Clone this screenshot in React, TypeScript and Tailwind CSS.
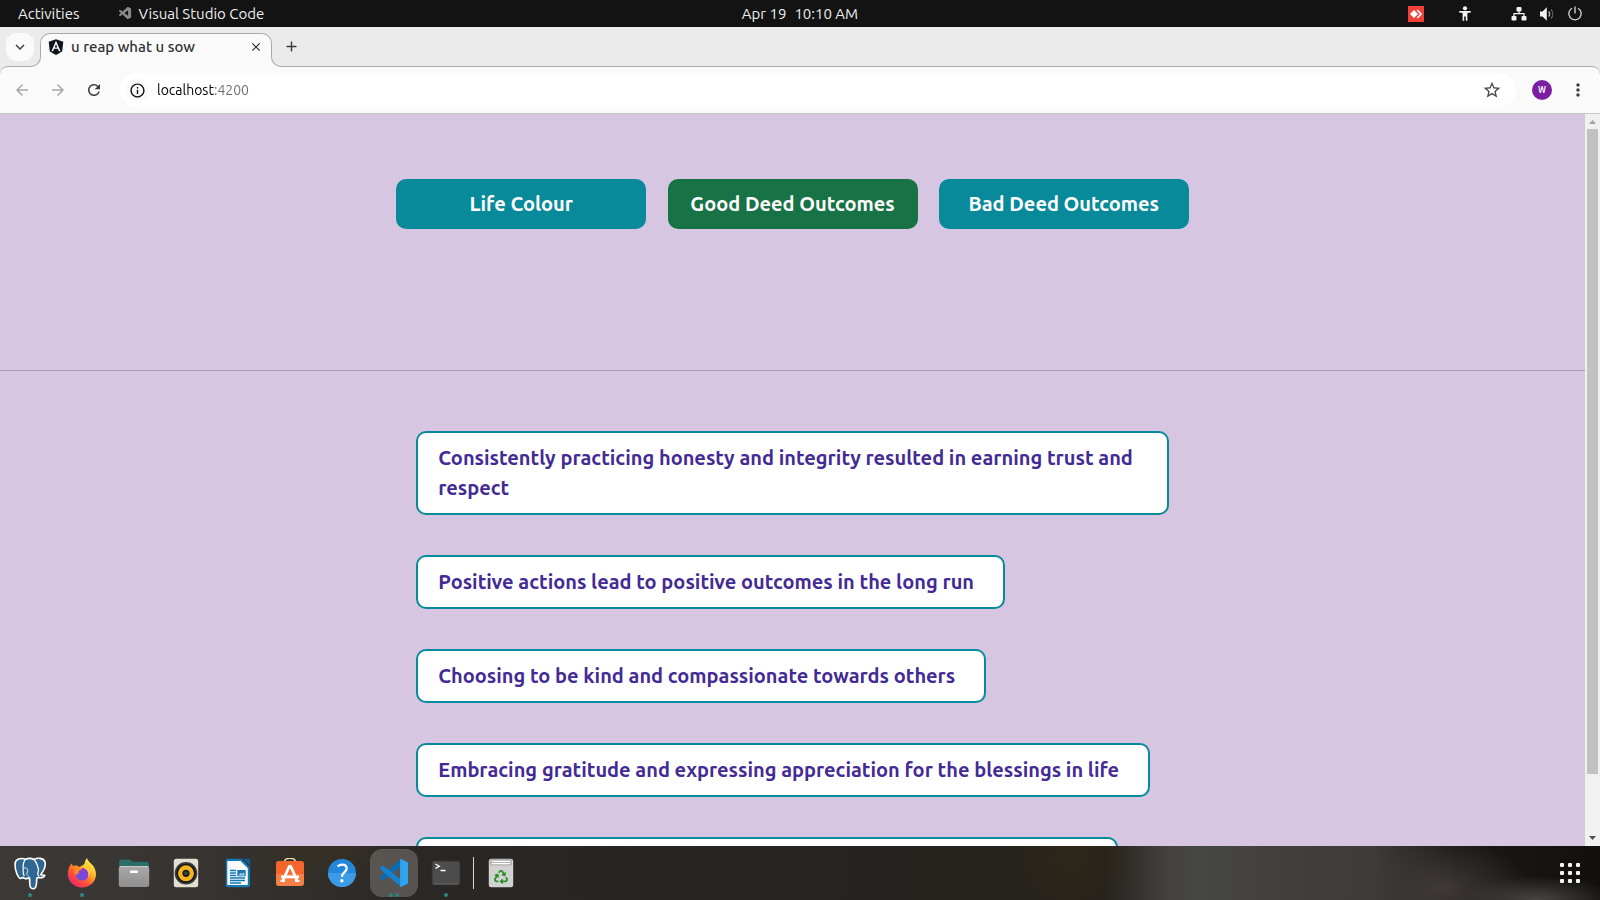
import type { ReactNode } from "react";
import { FaAngular, FaRecycle } from "react-icons/fa";
import { VscVscode } from "react-icons/vsc";
import {
  MdArrowBack,
  MdArrowForward,
  MdRefresh,
  MdInfoOutline,
  MdStarBorder,
  MdMoreVert,
  MdExpandMore,
  MdClose,
  MdAdd,
} from "react-icons/md";

const navItems = [
  { label: "Life Colour", active: false },
  { label: "Good Deed Outcomes", active: true },
  { label: "Bad Deed Outcomes", active: false },
];

const outcomes = [
  "Consistently practicing honesty and integrity resulted in earning trust and respect",
  "Positive actions lead to positive outcomes in the long run",
  "Choosing to be kind and compassionate towards others",
  "Embracing gratitude and expressing appreciation for the blessings in life",
];

function AnyDeskIcon() {
  return (
    <svg viewBox="0 0 16 16" className="size-4">
      <rect width="16" height="16" fill="#ef4136" />
      <path d="M6 4l4 4-4 4-4-4z" fill="#fff" />
      <path d="M8.6 4.6L9.8 3.6 14.2 8l-4.4 4.4-1.2-1L12 8z" fill="#fff" />
    </svg>
  );
}

function AccessibilityIcon() {
  return (
    <svg viewBox="0 0 16 16" className="size-4" fill="#f2f2f2">
      <circle cx="8" cy="2.3" r="2.1" />
      <path d="M2.200 5h11.600v1.500l-3.400.6V14.800H8.800V10.500H7.200v4.300H5.600V7.100L2.200 6.500z" />
    </svg>
  );
}

function NetworkIcon() {
  return (
    <svg viewBox="0 0 16 16" className="size-4" fill="#f2f2f2">
      <rect x="5.500" y="1" width="5" height="4.400" rx="1" />
      <rect x="0.500" y="10" width="5" height="4.400" rx="1" />
      <rect x="10.500" y="10" width="5" height="4.400" rx="1" />
      <path d="M8 5v3M3 10.500V7.700h10v2.800" fill="none" stroke="#f2f2f2" strokeWidth="1.200" />
    </svg>
  );
}

function VolumeIcon() {
  return (
    <svg viewBox="0 0 16 16" className="size-4">
      <path d="M1 5.500h2.500L7.800 1.300v13.400L3.500 10.500H1z" fill="#f2f2f2" />
      <path d="M9.700 5.500c1.200 1.400 1.200 3.600 0 5" fill="none" stroke="#bdbdbd" strokeWidth="1.200" />
      <path d="M12 3.500c2.400 2.600 2.400 6.400 0 9" fill="none" stroke="#666" strokeWidth="1.200" />
    </svg>
  );
}

function PowerIcon() {
  return (
    <svg viewBox="0 0 16 16" className="size-4" fill="none" stroke="#dcdcdc" strokeWidth="1.300">
      <path d="M5 2.300a6.200 6.200 0 1 0 6 0M8 .5v7" />
    </svg>
  );
}

function ElephantIcon() {
  return (
    <svg viewBox="0 0 32 33" className="h-[33px] w-8" strokeLinejoin="round" strokeLinecap="round">
      <path
        d="M20 2.500C23 .6 29.600.600 31 5c.9 3.500-1.300 8.800-4.200 12.600.9.800 2.600.6 4 .7-.9 1.900-3.800 2.700-6 2.300l-2 .4c-.3 3.600.1 7.600-1.500 9.700-1.400 1.500-4 1.300-4.900-.5-1-2.500-.5-6-.9-9.200l-1.900.4c-2 .4-4 .2-4.600-1l-2.500 1.100C3.900 21 1 13.500 1 7.500 1 2.500 5.500.3 11.600 2.200 14 1.200 17.600 1.200 20 2.500z"
        fill="#2f6792"
        stroke="#fff"
        strokeWidth="1.600"
      />
      <path
        d="M11.600 2.200C9.200 4.500 8.900 8 9.200 12c.1 2.800-.4 4.200.8 6.500M20 2.500c2.600 3 4.300 8 4.500 11.500-1.200 2-1 3.500.3 5"
        fill="none"
        stroke="#fff"
        strokeWidth="1.200"
      />
      <path
        d="M9.300 11.500c1.500-1 3.600-.8 4.200.6.600 2-.8 3.600-.6 5.300.8 1.400 2.300 1.700 2.400 3.100"
        fill="none"
        stroke="#dfe8ef"
        strokeWidth="1"
      />
    </svg>
  );
}

function FirefoxIcon() {
  return (
    <svg viewBox="0 0 30 30" className="size-[30px]">
      <defs>
        <linearGradient id="ffBody" x1=".85" y1=".1" x2=".2" y2=".95">
          <stop offset="0" stopColor="#fff24a" />
          <stop offset=".35" stopColor="#ffb02e" />
          <stop offset=".65" stopColor="#ff5634" />
          <stop offset="1" stopColor="#f0246f" />
        </linearGradient>
        <linearGradient id="ffCore" x1="0" y1="1" x2="1" y2="0">
          <stop offset="0" stopColor="#5a5be0" />
          <stop offset="1" stopColor="#9a34d6" />
        </linearGradient>
      </defs>
      <path
        d="M17.500 6c0-2.500 1.500-4.800 2.500-6 .6 3 3.200 4.600 5.200 6.800C26.800 8.500 29 12 29 16.200 29 23.500 22.800 29.500 15 29.500S.8 23.500.8 16c0-4.500 1.500-8.500 4.200-10.800.1 1.200.3 2 .9 2.800C8.500 7 11 7.400 12.500 9z"
        fill="url(#ffBody)"
      />
      <circle cx="15.200" cy="16.200" r="6.300" fill="url(#ffCore)" />
      <path
        d="M5 8.500c2.500-1.300 5.300-.9 7 1 1.200.6 2.400.6 3.300.7-.3 1.700-2.700 2.200-3.500 3.100-.4 1 .4 1.700-.3 2.700-1.500-.8-2.800 0-2.800 1.500-2-2.500-1.500-5-.7-6z"
        fill="#ff8a22"
      />
      <path d="M17.500 6c2.800 1.400 5.300 4.500 5.300 8 0 2-.6 3.500-1.500 4.500.8-4-1-7.500-4.800-8.800z" fill="#ffcf35" />
    </svg>
  );
}

function FilesIcon() {
  return (
    <svg viewBox="0 0 32 30" className="h-[30px] w-8">
      <defs>
        <linearGradient id="fold" x1="0" y1="0" x2="0" y2="1">
          <stop offset="0" stopColor="#a9a9a9" />
          <stop offset="1" stopColor="#8f8f8f" />
        </linearGradient>
      </defs>
      <path d="M1 4.500C1 2.500 2 1.500 4 1.500h7.500c1.500 0 2 2.200 3.500 2.200H28c2 0 3 1 3 3V20H1z" fill="#2a6d69" />
      <rect x=".8" y="8" width="30.400" height="21" rx="2.500" fill="url(#fold)" />
      <path d="M2 8.500h28" stroke="#c9c9c9" strokeWidth="1" />
      <rect x="12" y="12.500" width="8" height="2.600" rx=".8" fill="#fff" />
    </svg>
  );
}

function SpeakerIcon() {
  return (
    <svg viewBox="0 0 26 30" className="h-[30px] w-[26px]">
      <rect x=".8" y=".8" width="24.400" height="28.400" rx="2.500" fill="#e4dfd3" />
      <circle cx="13" cy="15.300" r="11.300" fill="#3a3a38" />
      <circle cx="13" cy="15.300" r="9.600" fill="#151515" />
      <circle cx="13" cy="15.300" r="8" fill="#f3b51c" />
      <circle cx="13" cy="15.300" r="3.600" fill="#1f1f1f" />
      <circle cx="13" cy="15.300" r="1.800" fill="#3d4650" />
    </svg>
  );
}

function WriterIcon() {
  return (
    <svg viewBox="0 0 26 30" className="h-[30px] w-[26px]">
      <path d="M3 .8h13.500L25 9.500V27c0 1.400-.8 2.200-2.200 2.200H3C1.600 29.200.8 28.400.8 27V3C.8 1.600 1.600.8 3 .8z" fill="#1379b5" />
      <path d="M3.300 3h12.300l7.200 7.300V26c0 .7-.3 1-1 1H3.300c-.7 0-1-.3-1-1V4c0-.7.300-1 1-1z" fill="#fafafa" />
      <path d="M18 .8h5.500c1 0 1.700.6 1.700 1.700v5.700z" fill="#15598a" />
      <path
        d="M5 12.500h6M5 15h6M5 17.500h6M5 20h15M5 22.500h15M5 25h11"
        stroke="#1379b5"
        strokeWidth="1.300"
      />
      <rect x="12.300" y="12" width="8.400" height="6.300" fill="#1e78ad" />
      <path d="M13.300 17.500l2.200-2.500 1.500 1 1.500-1.500 1.500 3z" fill="#9dd0ee" />
    </svg>
  );
}

function SoftwareIcon() {
  return (
    <svg viewBox="0 0 30 30" className="size-[30px]">
      <path d="M9.500 4.500V3.300C10 .6 12 .2 15 .2s5 .4 5.500 3.100v1.200" fill="none" stroke="#e9d7ad" strokeWidth="1.500" />
      <path d="M1 5.300C1 4 2 3 3.300 3h23.400C28 3 29 4 29 5.300V17H1z" fill="#f4662c" />
      <path d="M1 16h28v9.500c0 1.400-1 2.500-2.300 2.500H3.300C2 28 1 26.900 1 25.500z" fill="#f58045" />
      <path
        d="M8 22.500L14.200 8.500h1.600l6.200 14M6 18.800h18"
        fill="none"
        stroke="#fff"
        strokeWidth="2.800"
        strokeLinejoin="round"
      />
      <path d="M5.500 23h4.500M20 23h4.500" stroke="#fff" strokeWidth="2" />
    </svg>
  );
}

function HelpIcon() {
  return (
    <svg viewBox="0 0 30 30" className="size-[30px]">
      <circle cx="15" cy="15" r="14" fill="#2386dc" />
      <path d="M1 15a14 14 0 0 0 28 0z" fill="#3c9be4" />
      <path
        d="M10.500 8.500c1.300-1.200 2.900-1.800 4.600-1.800 2.700 0 4.600 1.400 4.600 3.800 0 3.600-4.800 3.900-4.800 8.300"
        fill="none"
        stroke="#fff"
        strokeWidth="2.200"
      />
      <circle cx="14.900" cy="22.700" r="1.700" fill="#fff" />
    </svg>
  );
}

function CodeIcon() {
  return (
    <svg viewBox="0 0 30 30" className="size-[30px]">
      <path d="M22 1v7.500L4.500 21.900c-.5.4-1 .3-1.400 0l-1.800-1.700c-.4-.4-.4-1 0-1.400z" fill="#0b6cb5" />
      <path d="M22 29v-7.500L4.500 8.100c-.5-.4-1-.3-1.400 0L1.300 9.800c-.4.4-.4 1 0 1.400z" fill="#1583cc" />
      <path d="M22 1l6.200 3c.5.300.8.7.8 1.200v19.600c0 .5-.3.900-.8 1.200L22 29c-.6.200-.9 0-.9-.6V1.600c0-.6.300-.8.900-.6z" fill="#2fa3ee" />
    </svg>
  );
}

function TerminalIcon() {
  return (
    <svg viewBox="0 0 30 30" className="size-[30px]">
      <rect x="1" y="3" width="28" height="24" rx="2.500" fill="#4c4c4c" stroke="#333" strokeWidth=".8" />
      <path d="M2.500 26h25" stroke="#6a6a6a" strokeWidth=".8" />
      <path d="M4.500 6l3.800 2.200-3.800 2.200M9.500 12.500h5" fill="none" stroke="#fff" strokeWidth="1.300" />
    </svg>
  );
}

function TrashIcon() {
  return (
    <span className="grid place-items-center">
      <svg viewBox="0 0 26 30" className="col-start-1 row-start-1 h-[30px] w-[26px]">
        <rect x=".8" y=".8" width="24.400" height="28.400" rx="2.500" fill="#d2d2d2" />
        <rect x="2.500" y="1.600" width="21" height="5.600" rx="1" fill="#8a8a8a" />
        <path d="M3.500 2.500h19v4h-19z" fill="#fff" />
        <path d="M4 4.500h18" stroke="#a8a8a8" strokeWidth=".9" />
      </svg>
      <FaRecycle className="col-start-1 row-start-1 mt-2 size-[14px] text-[#2b8f25]" />
    </span>
  );
}

function DockItem({
  name,
  dots = 0,
  active = false,
  children,
}: {
  name: string;
  dots?: number;
  active?: boolean;
  children: ReactNode;
}) {
  return (
    <button
      type="button"
      aria-label={name}
      className={
        active
          ? "relative flex size-12 items-center justify-center rounded-xl bg-white/20"
          : "relative flex size-12 items-center justify-center rounded-xl"
      }
    >
      {children}
      <span className="absolute inset-x-0 bottom-0 flex justify-center gap-[2px]">
        {Array.from({ length: dots }, (_, i) => (
          <span key={i} className="size-1 rounded-full bg-[#2f8580]" />
        ))}
      </span>
    </button>
  );
}

function TopBar() {
  return (
    <header className="grid h-[27px] shrink-0 grid-cols-[1fr_auto_1fr] items-center bg-[#131313] text-[15px] leading-[27px] text-[#eeeeee]">
      <div className="flex items-center pl-[18px]">
        <button type="button">Activities</button>
        <button type="button" className="ml-[38px] flex items-center gap-[6px]">
          <VscVscode className="size-[15px] text-[#8a8a8a]" />
          Visual Studio Code
        </button>
      </div>
      <button type="button" className="flex gap-2">
        <span>Apr 19</span>
        <span>10:10 AM</span>
      </button>
      <div className="flex items-center justify-end pr-[17px]">
        <AnyDeskIcon />
        <span className="ml-[33px] flex">
          <AccessibilityIcon />
        </span>
        <span className="ml-[38px] flex gap-3">
          <NetworkIcon />
          <VolumeIcon />
          <PowerIcon />
        </span>
      </div>
    </header>
  );
}

function TabStrip() {
  return (
    <div className="flex h-[39px] shrink-0 items-start gap-[6px] bg-[#ebebeb] px-[6px] pt-[6px]">
      <button
        type="button"
        aria-label="Search tabs"
        className="flex size-7 items-center justify-center rounded-[10px] bg-[#fafafa] text-[#3c3c3c]"
      >
        <MdExpandMore className="size-[18px]" />
      </button>
      <div className="relative z-10 flex h-[34px] w-[232px] items-start rounded-t-[10px] border border-b-0 border-[#ababab] bg-[#fafafa] pt-1 pr-[6px] pl-[6px]">
        <span className="absolute bottom-0 -left-[10px] size-[10px] bg-[#fafafa]">
          <span className="block size-[10px] rounded-br-[10px] border-r border-b border-[#ababab] bg-[#ebebeb]" />
        </span>
        <span className="absolute -right-[10px] bottom-0 size-[10px] bg-[#fafafa]">
          <span className="block size-[10px] rounded-bl-[10px] border-b border-l border-[#ababab] bg-[#ebebeb]" />
        </span>
        <span className="flex h-[18px] flex-1 items-center gap-[6px] text-[15px] font-medium text-[#2f3236]">
          <FaAngular className="size-[18px] text-[#0d121c]" />
          u reap what u sow
        </span>
        <button type="button" aria-label="Close tab" className="flex size-[18px] items-center justify-center text-[#2f2f2f]">
          <MdClose className="size-[14px]" />
        </button>
      </div>
      <button type="button" aria-label="New tab" className="flex size-[26px] items-center justify-center text-[#3c3c3c]">
        <MdAdd className="size-[17px]" />
      </button>
    </div>
  );
}

function Toolbar() {
  return (
    <div className="shrink-0 bg-[#ebebeb]">
      <div className="flex h-12 items-center rounded-t-[8px] border-t border-b border-t-[#ababab] border-b-[#c6c6c6] bg-[#fafafa] pr-3 pl-2">
        <div className="mr-3 flex gap-2">
          <button type="button" aria-label="Back" className="flex size-7 items-center justify-center text-[#a8a8a8]">
            <MdArrowBack className="size-[18px]" />
          </button>
          <button type="button" aria-label="Forward" className="flex size-7 items-center justify-center text-[#a8a8a8]">
            <MdArrowForward className="size-[18px]" />
          </button>
          <button type="button" aria-label="Reload" className="flex size-7 items-center justify-center text-[#3c3c3c]">
            <MdRefresh className="size-[18px]" />
          </button>
        </div>
        <div className="flex h-[34px] flex-1 items-center rounded-full bg-white pr-[14px] pl-[5px]">
          <button
            type="button"
            aria-label="View site information"
            className="mr-2 flex size-6 items-center justify-center rounded-full bg-[#fafafa] text-[#111]"
          >
            <MdInfoOutline className="size-[17px]" />
          </button>
          <input
            type="text"
            aria-label="Address"
            defaultValue="localhost:4200"
            className="min-w-0 flex-1 bg-[linear-gradient(90deg,#000_57px,#6a6a6a_57px)] bg-clip-text text-[14px] text-transparent outline-none"
          />
          <button type="button" aria-label="Bookmark this tab" className="text-[#474747]">
            <MdStarBorder className="size-5" />
          </button>
        </div>
        <button
          type="button"
          aria-label="Profile"
          className="mx-4 flex size-5 items-center justify-center rounded-full bg-[#7a1fa2] font-[Roboto,sans-serif] text-[9px] leading-5 font-medium text-white"
        >
          W
        </button>
        <button type="button" aria-label="Menu" className="flex size-5 items-center justify-center text-[#3c3c3c]">
          <MdMoreVert className="size-5" />
        </button>
      </div>
    </div>
  );
}

function Scrollbar() {
  return (
    <div className="flex w-[15px] shrink-0 flex-col items-center bg-[#f1f1f1]">
      <svg viewBox="0 0 15 15" className="size-[15px]">
        <path d="M4 10h7L7.500 6z" fill="#a3a3a3" />
      </svg>
      <div className="w-[11px] flex-[645] bg-[#c1c1c1]" />
      <div className="flex-[57]" />
      <svg viewBox="0 0 15 15" className="size-[15px]">
        <path d="M4 5h7L7.500 9z" fill="#505050" />
      </svg>
    </div>
  );
}

function Page() {
  return (
    <div className="flex min-h-0 flex-1">
      <main className="flex-1 overflow-hidden bg-[#d6c6e1] pt-[65px]">
        <nav className="mx-auto flex w-1/2 justify-between pb-[141px]">
          {navItems.map((item) => (
            <button
              key={item.label}
              type="button"
              className={
                item.active
                  ? "h-[50px] w-[250px] rounded-[10px] bg-[#177245] text-[20px] font-bold text-white"
                  : "h-[50px] w-[250px] rounded-[10px] bg-[#088a9b] text-[20px] font-bold text-white"
              }
            >
              {item.label}
            </button>
          ))}
        </nav>
        <hr className="border-[#a99db4]" />
        <ul className="mx-auto mt-[60px] flex w-1/2 flex-col items-start gap-10 px-5">
          {outcomes.map((text) => (
            <li
              key={text}
              className="rounded-[10px] border-2 border-[#088a9b] bg-white py-[10px] pr-[29px] pl-5 text-[20px] leading-[30px] font-bold text-[#432a94]"
            >
              {text}
            </li>
          ))}
          <li className="h-[54px] w-[702px] rounded-[10px] border-2 border-[#088a9b] bg-white" />
        </ul>
      </main>
      <Scrollbar />
    </div>
  );
}

function Dock() {
  return (
    <footer className="flex h-[54px] shrink-0 items-center justify-between bg-[radial-gradient(ellipse_80px_24px_at_96%_100%,#464544,transparent),radial-gradient(ellipse_90px_50px_at_90%_80%,#3f3a37,transparent),radial-gradient(ellipse_70px_70px_at_67%_20%,#2e2719,transparent),radial-gradient(ellipse_80px_40px_at_20%_0%,#363024,transparent),linear-gradient(90deg,#3d3936_0%,#36322f_14%,#2a2623_28%,#272522_45%,#25221d_69%,#434241_73%,#464645_75%,#413f3c_81%,#3c3b3a_86%,#1c1917_91%,#12100e_100%)] pr-5 pl-[6px]">
      <div className="flex items-center gap-1">
        <DockItem name="pgAdmin" dots={1}>
          <ElephantIcon />
        </DockItem>
        <DockItem name="Firefox" dots={1}>
          <FirefoxIcon />
        </DockItem>
        <DockItem name="Files">
          <FilesIcon />
        </DockItem>
        <DockItem name="Rhythmbox">
          <SpeakerIcon />
        </DockItem>
        <DockItem name="LibreOffice Writer">
          <WriterIcon />
        </DockItem>
        <DockItem name="Ubuntu Software">
          <SoftwareIcon />
        </DockItem>
        <DockItem name="Help">
          <HelpIcon />
        </DockItem>
        <DockItem name="Visual Studio Code" dots={2} active>
          <CodeIcon />
        </DockItem>
        <DockItem name="Terminal" dots={1}>
          <TerminalIcon />
        </DockItem>
        <span className="-mx-px h-8 w-px bg-[#d8d8d8]" />
        <DockItem name="Trash">
          <TrashIcon />
        </DockItem>
      </div>
      <button type="button" aria-label="Show applications" className="grid grid-cols-3 gap-1">
        {Array.from({ length: 9 }, (_, i) => (
          <span key={i} className="size-1 rounded-[1px] bg-[#f4f4f4]" />
        ))}
      </button>
    </footer>
  );
}

export default function App() {
  return (
    <div className="flex h-screen flex-col overflow-hidden font-[Ubuntu,'Noto_Sans',sans-serif]">
      <TopBar />
      <TabStrip />
      <Toolbar />
      <Page />
      <Dock />
    </div>
  );
}
